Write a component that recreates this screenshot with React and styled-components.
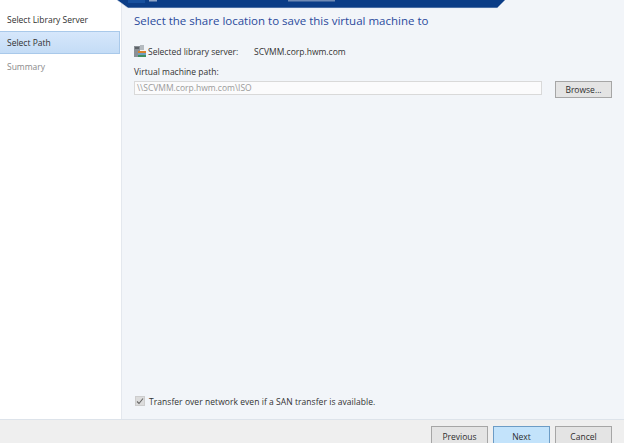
import React from "react";
import styled, { createGlobalStyle } from "styled-components";

const Global = createGlobalStyle`
  html, body { margin: 0; padding: 0; background: #fff; overflow: hidden; }
  * { box-sizing: border-box; }
`;

const Windowed = styled.div`
  position: relative;
  width: 624px;
  height: 443px;
  display: flex;
  flex-direction: column;
  font-family: "Open Sans", "Noto Sans", sans-serif;
  font-size: 8.5px;
  color: #333;
  overflow: hidden;
`;
const Main = styled.div`
  flex: 0 0 419px;
  display: flex;
`;
const Side = styled.nav`
  flex: 0 0 122px;
  background: #fff;
  border-right: 1px solid #e4e8ee;
  padding-top: 7px;
  display: flex;
  flex-direction: column;
`;
const Step = styled.div`
  height: ${p => (p.$active ? 23 : 24)}px;
  width: 120px;
  display: flex;
  align-items: center;
  padding-left: 7px;
  color: ${p => (p.$muted ? "#8a8a8a" : "#303030")};
  background: ${p => (p.$active ? "linear-gradient(#d6e7fb, #c4dcf6)" : "transparent")};
  border: ${p => (p.$active ? "1px solid #a9c9ea" : "1px solid transparent")};
  border-left: none;
`;
const Content = styled.main`
  flex: 1;
  background: #f2f5f9;
  padding: 13px 11px 0 12px;
  display: flex;
  flex-direction: column;
`;
const Title = styled.h1`
  margin: 0;
  font-size: 11.5px;
  line-height: 16px;
  font-weight: 400;
  color: #2a4a9c;
`;
const ServerRow = styled.div`
  margin-top: 15px;
  height: 14px;
  display: flex;
  align-items: center;
`;
const ServerIcon = styled.svg`
  width: 12px;
  height: 13px;
  margin-right: 2px;
  flex: none;
`;
const ServerLabel = styled.span`
  width: 106px;
`;
const PathLabel = styled.div`
  margin-top: 7px;
  height: 13px;
  line-height: 13px;
`;
const PathRow = styled.div`
  margin-top: 2px;
  display: flex;
  align-items: flex-start;
`;
const PathInput = styled.div`
  width: 408px;
  height: 14px;
  margin-top: 1px;
  background: #fbfbfc;
  border: 1px solid #d9d9d9;
  color: #9a9a9a;
  padding-left: 2px;
  line-height: 12px;
  font-size: 8.5px;
`;
const Button = styled.div`
  height: ${p => p.$h || 18}px;
  width: ${p => p.$w}px;
  display: flex;
  align-items: center;
  justify-content: center;
  background: ${p => (p.$primary ? "#c3e3fb" : "#e4e4e4")};
  border: 1px solid ${p => (p.$primary ? "#6c9cc6" : "#a6a6a6")};
  color: #2e2e2e;
  font-size: 8.5px;
`;
const BrowseButton = styled(Button)`
  margin-left: 13px;
  margin-top: 1px;
`;
const Spacer = styled.div`
  flex: 1;
`;
const CheckRow = styled.label`
  display: flex;
  align-items: center;
  height: 12px;
  margin-bottom: 12px;
  letter-spacing: 0.05px;
`;
const CheckBox = styled.span`
  width: 10px;
  height: 10px;
  margin: 0 4px 0 1px;
  background: #dcdcdc;
  border: 1px solid #cdcdcd;
  display: flex;
  align-items: center;
  justify-content: center;
`;
const Footer = styled.footer`
  flex: 1;
  background: #efefef;
  border-top: 1px solid #dde3ea;
  display: flex;
  justify-content: flex-end;
  align-items: flex-start;
  gap: 5px;
  padding: 6px 12px 0 0;
`;
const Banner = styled.svg`
  position: absolute;
  left: 116px;
  top: 0;
  width: 390px;
  height: 9px;
`;

export default function App() {
  return (
    <Windowed>
      <Global />
      <Main>
        <Side>
          <Step>Select Library Server</Step>
          <Step $active>Select Path</Step>
          <Step $muted>Summary</Step>
        </Side>
        <Content>
          <Title>Select the share location to save this virtual machine to</Title>
          <ServerRow>
            <ServerIcon viewBox="0 0 12 13">
              <rect x="0" y="1" width="6" height="11" fill="#8a9096" />
              <rect x="1" y="2" width="4" height="2" fill="#5d6368" />
              <rect x="6" y="0" width="4" height="5" fill="#b5bbc0" />
              <rect x="4" y="6" width="8" height="2" fill="#d9822b" />
              <rect x="4" y="8" width="8" height="2" fill="#6f9fc0" />
              <rect x="4" y="10" width="8" height="2" fill="#3f8f5f" />
            </ServerIcon>
            <ServerLabel>Selected library server:</ServerLabel>
            <span>SCVMM.corp.hwm.com</span>
          </ServerRow>
          <PathLabel>Virtual machine path:</PathLabel>
          <PathRow>
            <PathInput>\\SCVMM.corp.hwm.com\ISO</PathInput>
            <BrowseButton $w={57} $h={17}>Browse...</BrowseButton>
          </PathRow>
          <Spacer />
          <CheckRow>
            <CheckBox>
              <svg width="8" height="8" viewBox="0 0 8 8">
                <path d="M1 4.5 L3 6.5 L7 1.5" fill="none" stroke="#666" strokeWidth="1.1" />
              </svg>
            </CheckBox>
            Transfer over network even if a SAN transfer is available.
          </CheckRow>
        </Content>
      </Main>
      <Footer>
        <Button $w={57} $h={20}>Previous</Button>
        <Button $w={57} $h={20} $primary>Next</Button>
        <Button $w={57} $h={20}>Cancel</Button>
      </Footer>
      <Banner viewBox="0 0 390 9">
        <path d="M1 0 L389 0 L381 8 L12 8 Z" fill="#0b3d87" />
        <path d="M1 0 L12 8 L381 8" fill="none" stroke="#dfe6f0" strokeWidth="0.6" />
        <rect x="12" y="0" width="17" height="3" fill="#17509e" />
        <rect x="33" y="0" width="8" height="1.5" fill="#8ea4c6" />
        <rect x="172" y="0" width="47" height="1.5" fill="#6f8ab4" />
      </Banner>
    </Windowed>
  );
}
